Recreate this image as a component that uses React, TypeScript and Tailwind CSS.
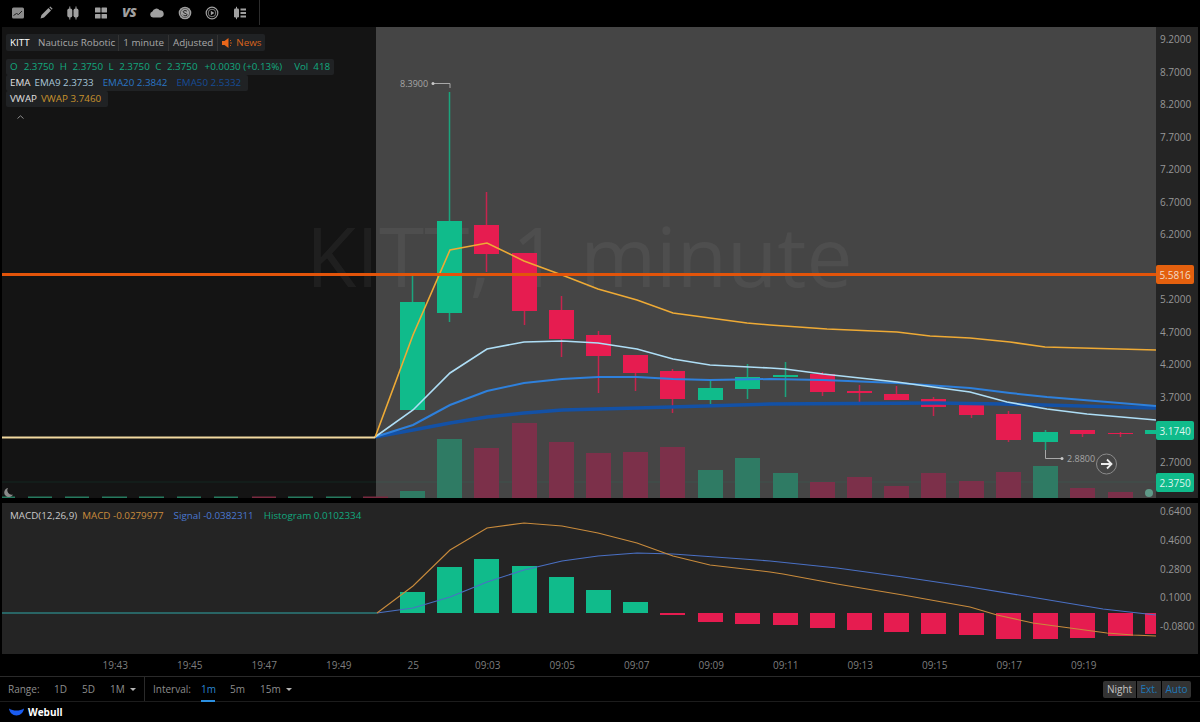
import React from "react";

const GREEN = "#10bb8b";
const RED = "#e61c50";

// x is the left edge of each bar, page coordinates
const xs = [400, 437, 474, 512, 549, 586, 623, 660, 698, 735, 773, 810, 847, 884, 921, 959, 996, 1033, 1070, 1108, 1145];

// [bodyTop, bodyBottom, wickTop, wickBottom, up]
const candles: [number, number, number, number, boolean][] = [
  [302, 410, 275, 410, true],
  [221, 313, 92, 322, true],
  [225, 254, 192, 272, false],
  [253, 311, 253, 325, false],
  [310, 339, 296, 357, false],
  [335, 356, 331, 393, false],
  [355, 373, 355, 391, false],
  [371, 399, 369, 413, false],
  [388, 400, 379, 404, true],
  [377, 389, 364, 399, true],
  [375, 377, 362, 397, true],
  [374, 392, 372, 396, false],
  [391, 393, 385, 403, false],
  [394, 400, 386, 400, false],
  [399, 407, 397, 416, false],
  [405, 415, 405, 418, false],
  [414, 440, 411, 442, false],
  [432, 442, 430, 450, true],
  [430, 434, 430, 437, false],
  [433, 434, 432, 437, false],
  [430, 434, 430, 434, true],
];

const volumeTops = [491, 439, 448, 423, 442, 453, 452, 447, 470, 458, 473, 482, 477, 486, 473, 481, 472, 466, 488, 492];
const volumeUp = [true, true, false, false, false, false, false, false, true, true, true, false, false, false, false, false, false, true, false, false];
// flat overnight volume, [x, width, up]
const oldVolumes: [number, number, boolean][] = [
  [2, 13, true],
  [28, 24, true],
  [65, 24, true],
  [102, 25, true],
  [139, 25, true],
  [177, 24, true],
  [214, 24, true],
  [252, 24, false],
  [288, 25, true],
  [326, 25, true],
  [363, 25, false],
];

const macdBars = [592, 567, 559, 566, 577, 590, 602, 615, 622, 624, 625, 628, 630, 632, 634, 635, 639, 639, 638, 636, 634];

const vwap = "375,437.5 413,335 450,250 487,243 524,261 562,275 598,289 637,300 673,313 747,323 770,325 827,329 897,332 930,336 970,338 1010,342 1045,347 1156,350";
const ema9 = "375,437 413,410 450,373 487,349 524,342 562,341 598,343 637,349 673,359 710,365 770,368 785,369 823,374 860,378 897,382 933,387 970,392 1007,402 1047,409 1087,414 1156,420";
const ema20 = "375,437 413,425 450,405 487,391 524,383 562,379 598,377 637,377 673,379 710,380 770,379 823,380 897,383 970,388 1010,393 1047,397 1156,406";
const ema50 = "375,437 413,430 450,423 487,417 524,413 562,410 637,408 770,404 937,403 1003,404 1156,408";
const macdLine = "377,613 413,586 450,550 487,528 524,523 562,526 598,533 637,543 673,556 710,565 770,572 783,574 837,584 903,595 970,607 997,615 1033,623 1070,628 1107,633 1133,635 1156,636";
const signalLine = "377,613 413,608 450,597 487,582 524,570 562,561 598,556 637,553 673,554 770,561 837,568 903,577 970,587 1037,598 1103,609 1156,615";

// 5.7000 and 3.2000 sit behind the price badges, their rows stay empty
const prices = ["9.2000", "8.7000", "8.2000", "7.7000", "7.2000", "6.7000", "6.2000", "", "5.2000", "4.7000", "4.2000", "3.7000", "", "2.7000"];
const macdTicks = ["0.6400", "0.4600", "0.2800", "0.1000", "-0.0800"];
const times = ["19:43", "19:45", "19:47", "19:49", "25", "09:03", "09:05", "09:07", "09:09", "09:11", "09:13", "09:15", "09:17", "09:19"];

const ToolIcon = ({ children }: { children: React.ReactNode }) => (
  <div className="flex w-[27.8px] items-center justify-center">
    <svg width="16" height="16" viewBox="0 0 16 16" fill="#a0a0a0">
      {children}
    </svg>
  </div>
);

const Toolbar = () => (
  <div className="flex h-[25px] text-[#a0a0a0]">
    <div className="flex w-[260px] border-r border-[#2c2c2c] pl-1">
      <ToolIcon>
        <rect x="2" y="2.5" width="12" height="11" rx="1.5" fill="#8c8c8c" />
        <path d="M3.5 10.5 6.5 8.5 8.5 9.5 12 6" fill="none" stroke="#222" strokeWidth="1" />
      </ToolIcon>
      <ToolIcon>
        <path d="M2.5 13.5 3.5 10 10.5 3 13 5.5 6 12.5Z" />
        <path d="M11.3 2.2 12.3 1.4 14.6 3.7 13.8 4.7Z" />
      </ToolIcon>
      <ToolIcon>
        <rect x="2.3" y="3.5" width="5" height="9" rx="2" />
        <rect x="4.3" y="1.5" width="1" height="13" />
        <rect x="8.5" y="3.5" width="5" height="9" rx="2" />
        <rect x="10.5" y="1.5" width="1" height="13" />
      </ToolIcon>
      <ToolIcon>
        <rect x="2" y="2.5" width="5.5" height="5" rx="0.6" />
        <rect x="8.5" y="2.5" width="5.5" height="5" rx="0.6" />
        <rect x="2" y="9" width="5.5" height="4.5" rx="0.6" />
        <rect x="8.5" y="9" width="5.5" height="4.5" rx="0.6" />
      </ToolIcon>
      <div className="flex w-[27.8px] items-center justify-center text-[13px] font-extrabold italic tracking-[-0.5px]">
        VS
      </div>
      <ToolIcon>
        <path d="M4 12.5a3 3 0 0 1-.6-5.9A4.2 4.2 0 0 1 10.7 5.2a3.7 3.7 0 0 1 1.1 7.3Z" />
      </ToolIcon>
      <ToolIcon>
        <circle cx="8" cy="8" r="6.3" />
        <circle cx="8" cy="8" r="4.6" fill="none" stroke="#333" strokeWidth="0.6" />
        <path d="M10 6.4C9.5 5.3 6.2 5.2 6.2 6.8S10.1 8.3 10.1 9.8 6.6 11 6 9.7" fill="none" stroke="#222" strokeWidth="1" />
      </ToolIcon>
      <ToolIcon>
        <circle cx="8" cy="8" r="5.8" fill="none" stroke="#a0a0a0" strokeWidth="1.2" />
        <circle cx="8" cy="8" r="3.8" fill="none" stroke="#a0a0a0" strokeWidth="0.8" />
        <path d="M6.8 5.8 10.4 8 6.8 10.2Z" />
      </ToolIcon>
      <ToolIcon>
        <rect x="2" y="3.5" width="5" height="9" rx="1.2" />
        <rect x="4" y="1.8" width="1" height="12.4" />
        <rect x="8.5" y="3.5" width="5.5" height="2" />
        <rect x="8.5" y="7" width="5.5" height="2" />
        <rect x="8.5" y="10.5" width="5.5" height="2" />
      </ToolIcon>
    </div>
  </div>
);

const Legend = () => (
  <div className="absolute left-[4px] top-[7px] flex flex-col items-start text-[9.8px] leading-[16px]">
    <div className="flex h-[17px] items-center rounded-[2px] bg-[#202224] text-[#a9a9a9]">
      <span className="pl-1 pr-[8.5px] text-white">KITT</span>
      <span className="border-r border-[#333] pr-[3px]">Nauticus Robotic</span>
      <span className="border-r border-[#333] px-1">1 minute</span>
      <span className="border-r border-[#333] px-1">Adjusted</span>
      <span className="flex items-center gap-[3px] px-1 text-[#d9621c]">
        <svg width="11" height="10" viewBox="0 0 11 10" fill="#e8661a">
          <path d="M0 3h2.5L6.5 0v10L2.5 7H0Z" />
          <path d="M8 2.5h1M8 5h2M8 7.5h1" stroke="#e8661a" strokeWidth="0.8" />
        </svg>
        News
      </span>
    </div>
    <div className="mt-[8px] flex h-[16px] items-center rounded-[2px] bg-[#202224] pl-1 pr-[4px] text-[#12a97f]">
      <span className="mr-[6px]">O</span>
      <span className="mr-[5.5px]">2.3750</span>
      <span className="mr-[5.5px]">H</span>
      <span className="mr-[5.5px]">2.3750</span>
      <span className="mr-[5.5px]">L</span>
      <span className="mr-[5.5px]">2.3750</span>
      <span className="mr-[5.5px]">C</span>
      <span className="mr-[7px]">2.3750</span>
      <span className="mr-[12px]">+0.0030 (+0.13%)</span>
      <span className="mr-[5px]">Vol</span>
      <span>418</span>
    </div>
    <div className="flex h-[16px] items-center rounded-[2px] bg-[#202224] pl-1 pr-[7px]">
      <span className="mr-[4px] text-[#e0e0e0]">EMA</span>
      <span className="mr-[9px] text-[#a8c6d8]">EMA9 2.3733</span>
      <span className="mr-[9px] text-[#2a76c4]">EMA20 2.3842</span>
      <span className="text-[#164c96]">EMA50 2.5332</span>
    </div>
    <div className="flex h-[16px] items-center rounded-[2px] bg-[#202224] pl-1 pr-[7px]">
      <span className="mr-[4px] text-[#e0e0e0]">VWAP</span>
      <span className="text-[#c9922c]">VWAP 3.7460</span>
    </div>
    <svg className="ml-[11px] mt-[8px]" width="7" height="4" viewBox="0 0 7 4">
      <path d="M0.5 3.5 3.5 0.8 6.5 3.5" fill="none" stroke="#9a9a9a" strokeWidth="0.9" />
    </svg>
  </div>
);

const PriceChart = () => (
  <svg className="absolute left-[-2px] top-0" width="1156" height="471" viewBox="0 27 1156 471">
    <text x="306" y="287" fontSize="82" fill="#ffffff" fillOpacity="0.05" fontFamily="'Open Sans', sans-serif">
      KITT, 1 minute
    </text>
    <line x1="0" x2="1156" y1="482" y2="482" stroke="#10bb8b" strokeOpacity="0.12" />
    {oldVolumes.map(([x, width, up]) => (
      <rect key={x} x={x} y="496.5" width={width} height="1.5" fill={up ? "#267a5f" : "#7a2a40"} />
    ))}
    {volumeTops.map((top, i) => (
      <rect key={xs[i]} x={xs[i]} y={top} width="25" height={498 - top} fill={volumeUp[i] ? "#2f7b64" : "#7c304a"} />
    ))}
    <circle cx="1149" cy="493" r="4" fill="#5f9a88" />
    {candles.map(([top, bottom, wickTop, wickBottom, up], i) => {
      const color = up ? GREEN : RED;
      const width = i === 20 ? 11 : 25;
      return (
        <g key={xs[i]}>
          {i < 20 && <rect x={xs[i] + 11.75} y={wickTop} width="1.5" height={wickBottom - wickTop} fill={color} fillOpacity="0.8" />}
          <rect x={xs[i]} y={top} width={width} height={bottom - top} fill={color} />
        </g>
      );
    })}
    <polyline points={ema50} fill="none" stroke="#1351a6" strokeWidth="3.5" />
    <polyline points={ema20} fill="none" stroke="#2e80dc" strokeWidth="2" />
    <polyline points={ema9} fill="none" stroke="#aedef6" strokeWidth="1.6" />
    <polyline points={vwap} fill="none" stroke="#eeaa35" strokeWidth="1.6" />
    <line x1="0" x2="375" y1="437.5" y2="437.5" stroke="#f2d9a0" strokeWidth="2" />
    <rect x="0" y="273" width="1156" height="3" fill="#e2540a" />

    <path d="M433 83.5H450V88" fill="none" stroke="#a8a8a8" />
    <circle cx="433" cy="83.5" r="1.5" fill="#c8c8c8" />
    <text x="400" y="87" fontSize="9" fill="#a6a6a6" fontFamily="'Open Sans', sans-serif">8.3900</text>
    <path d="M1045.5 450V458.5H1062" fill="none" stroke="#a8a8a8" />
    <circle cx="1062" cy="458.5" r="1.5" fill="#c8c8c8" />
    <text x="1067" y="462" fontSize="9" fill="#a6a6a6" fontFamily="'Open Sans', sans-serif">2.8800</text>

    <circle cx="1106.5" cy="464" r="10" fill="none" stroke="#8a8a8a" />
    <path d="M1101 464H1111M1107 459.5 1111.5 464 1107 468.5" fill="none" stroke="#ececec" strokeWidth="1.8" />
    <path d="M8 488a4.6 4.6 0 1 0 5 6.5 4.4 4.4 0 0 1-5-6.5Z" fill="#8a8a8a" />
  </svg>
);

const MacdChart = () => (
  <svg className="absolute left-[-2px] top-0" width="1156" height="151" viewBox="0 503 1156 151">
    <line x1="0" x2="377" y1="613" y2="613" stroke="#2ea5a5" strokeWidth="1.2" />
    {macdBars.map((edge, i) => {
      const up = edge < 613;
      const top = up ? edge : 613;
      return (
        <rect key={xs[i]} x={xs[i]} y={top} width={i === 20 ? 11 : 25} height={up ? 613 - edge : edge - 613} fill={up ? GREEN : RED} />
      );
    })}
    <polyline points={signalLine} fill="none" stroke="#4a70c4" strokeWidth="1.1" />
    <polyline points={macdLine} fill="none" stroke="#c98b3c" strokeWidth="1.1" />
  </svg>
);

const Badge = ({ className, children }: { className: string; children: React.ReactNode }) => (
  <div className={`absolute left-0 flex h-[19px] w-[38px] items-center justify-center rounded-[2px] text-[10px] ${className}`}>
    {children}
  </div>
);

export default function App() {
  return (
    <div className="flex h-[722px] w-[1200px] flex-col overflow-hidden bg-black font-['Open_Sans',sans-serif]">
      <Toolbar />

      {/* price pane */}
      <div className="mt-[2px] flex h-[471px] pl-[2px] pr-[2px]">
        <div className="relative flex w-[1154px] overflow-hidden">
          <div className="w-[373.5px] bg-[#141414]" />
          <div className="flex-1 bg-[#454545]" />
          <PriceChart />
          <Legend />
        </div>
        <div className="relative flex-1 bg-[#242424] pl-[4px] pt-[4px] text-[10px] leading-[16px] text-[#979797]">
          <div className="flex flex-col gap-[16.5px]">
            {prices.map((p, i) => (
              <span key={i} className="h-[16px]">
                {p}
              </span>
            ))}
          </div>
          <Badge className="top-[238px] bg-[#e4600e] text-[#f3dcc8]">5.5816</Badge>
          <Badge className="top-[394px] bg-[#10bb8b] text-[#dff5ee]">3.1740</Badge>
          <Badge className="top-[446px] bg-[#10bb8b] text-[#dff5ee]">2.3750</Badge>
        </div>
      </div>

      {/* macd pane */}
      <div className="mt-[5px] flex h-[151px] pl-[2px] pr-[2px]">
        <div className="relative w-[1154px] overflow-hidden bg-[#242424]">
          <MacdChart />
          <div className="absolute left-[8px] top-[5px] flex h-[16px] items-center text-[9.8px] leading-[16px]">
            <span className="mr-[5px] text-[#c9c9c9]">MACD(12,26,9)</span>
            <span className="mr-[10px] text-[#c98b3c]">MACD -0.0279977</span>
            <span className="mr-[10px] text-[#4a78d0]">Signal -0.0382311</span>
            <span className="text-[#12a97f]">Histogram 0.0102334</span>
          </div>
        </div>
        <div className="flex flex-1 flex-col gap-[12.8px] bg-[#242424] pl-[4px] text-[10px] leading-[16px] text-[#979797]">
          {macdTicks.map((t) => (
            <span key={t}>{t}</span>
          ))}
        </div>
      </div>

      {/* time axis */}
      <div className="flex h-[23px] items-center border-b border-[#2a2a2a] pl-[78px] text-[10px] text-[#7e7e7e]">
        {times.map((t) => (
          <span key={t} className="w-[74.5px] text-center">
            {t}
          </span>
        ))}
      </div>

      {/* range / interval bar */}
      <div className="flex h-[25px] items-center border-b border-[#1c1c1c] pl-[8px] pr-[9px] text-[10px] text-[#8d8d8d]">
        <span className="w-[46px]">Range:</span>
        <span className="w-[28px]">1D</span>
        <span className="w-[28px]">5D</span>
        <span className="flex w-[34px] items-center gap-[5px]">
          1M
          <span className="h-0 w-0 border-x-[3px] border-t-[3px] border-x-transparent border-t-[#b5b5b5]" />
        </span>
        <div className="h-full w-px bg-[#2a2a2a]" />
        <span className="ml-[8px] w-[48px]">Interval:</span>
        <span className="relative w-[29px] text-[#2b86d0]">
          1m
          <span className="absolute -bottom-[5px] left-0 h-[2px] w-[14px] bg-[#2b8fe0]" />
        </span>
        <span className="w-[30px]">5m</span>
        <span className="flex items-center gap-[5px]">
          15m
          <span className="h-0 w-0 border-x-[3px] border-t-[3px] border-x-transparent border-t-[#b5b5b5]" />
        </span>
        <div className="ml-auto flex h-[17px] items-stretch gap-px">
          <span className="flex w-[33px] items-center justify-center rounded-l-[2px] bg-[#333333] text-[#c4c4c4]">Night</span>
          <span className="flex w-[24px] items-center justify-center bg-[#333333] text-[#1f78b8]">Ext.</span>
          <span className="flex w-[29px] items-center justify-center rounded-r-[2px] bg-[#333333] text-[#1f78b8]">Auto</span>
        </div>
      </div>

      {/* brand footer */}
      <div className="flex flex-1 items-center gap-[4px] pl-[9px]">
        <svg width="15" height="8" viewBox="0 0 15 8">
          <path d="M0 0.5C2.5 2 4.5 2.6 7.5 2.6S12.5 2 15 0.5C14.5 4.5 11.5 7.5 7.5 7.5S0.5 4.5 0 0.5Z" fill="#1a5cf0" />
        </svg>
        <span className="text-[10px] font-bold text-white">Webull</span>
      </div>
    </div>
  );
}
